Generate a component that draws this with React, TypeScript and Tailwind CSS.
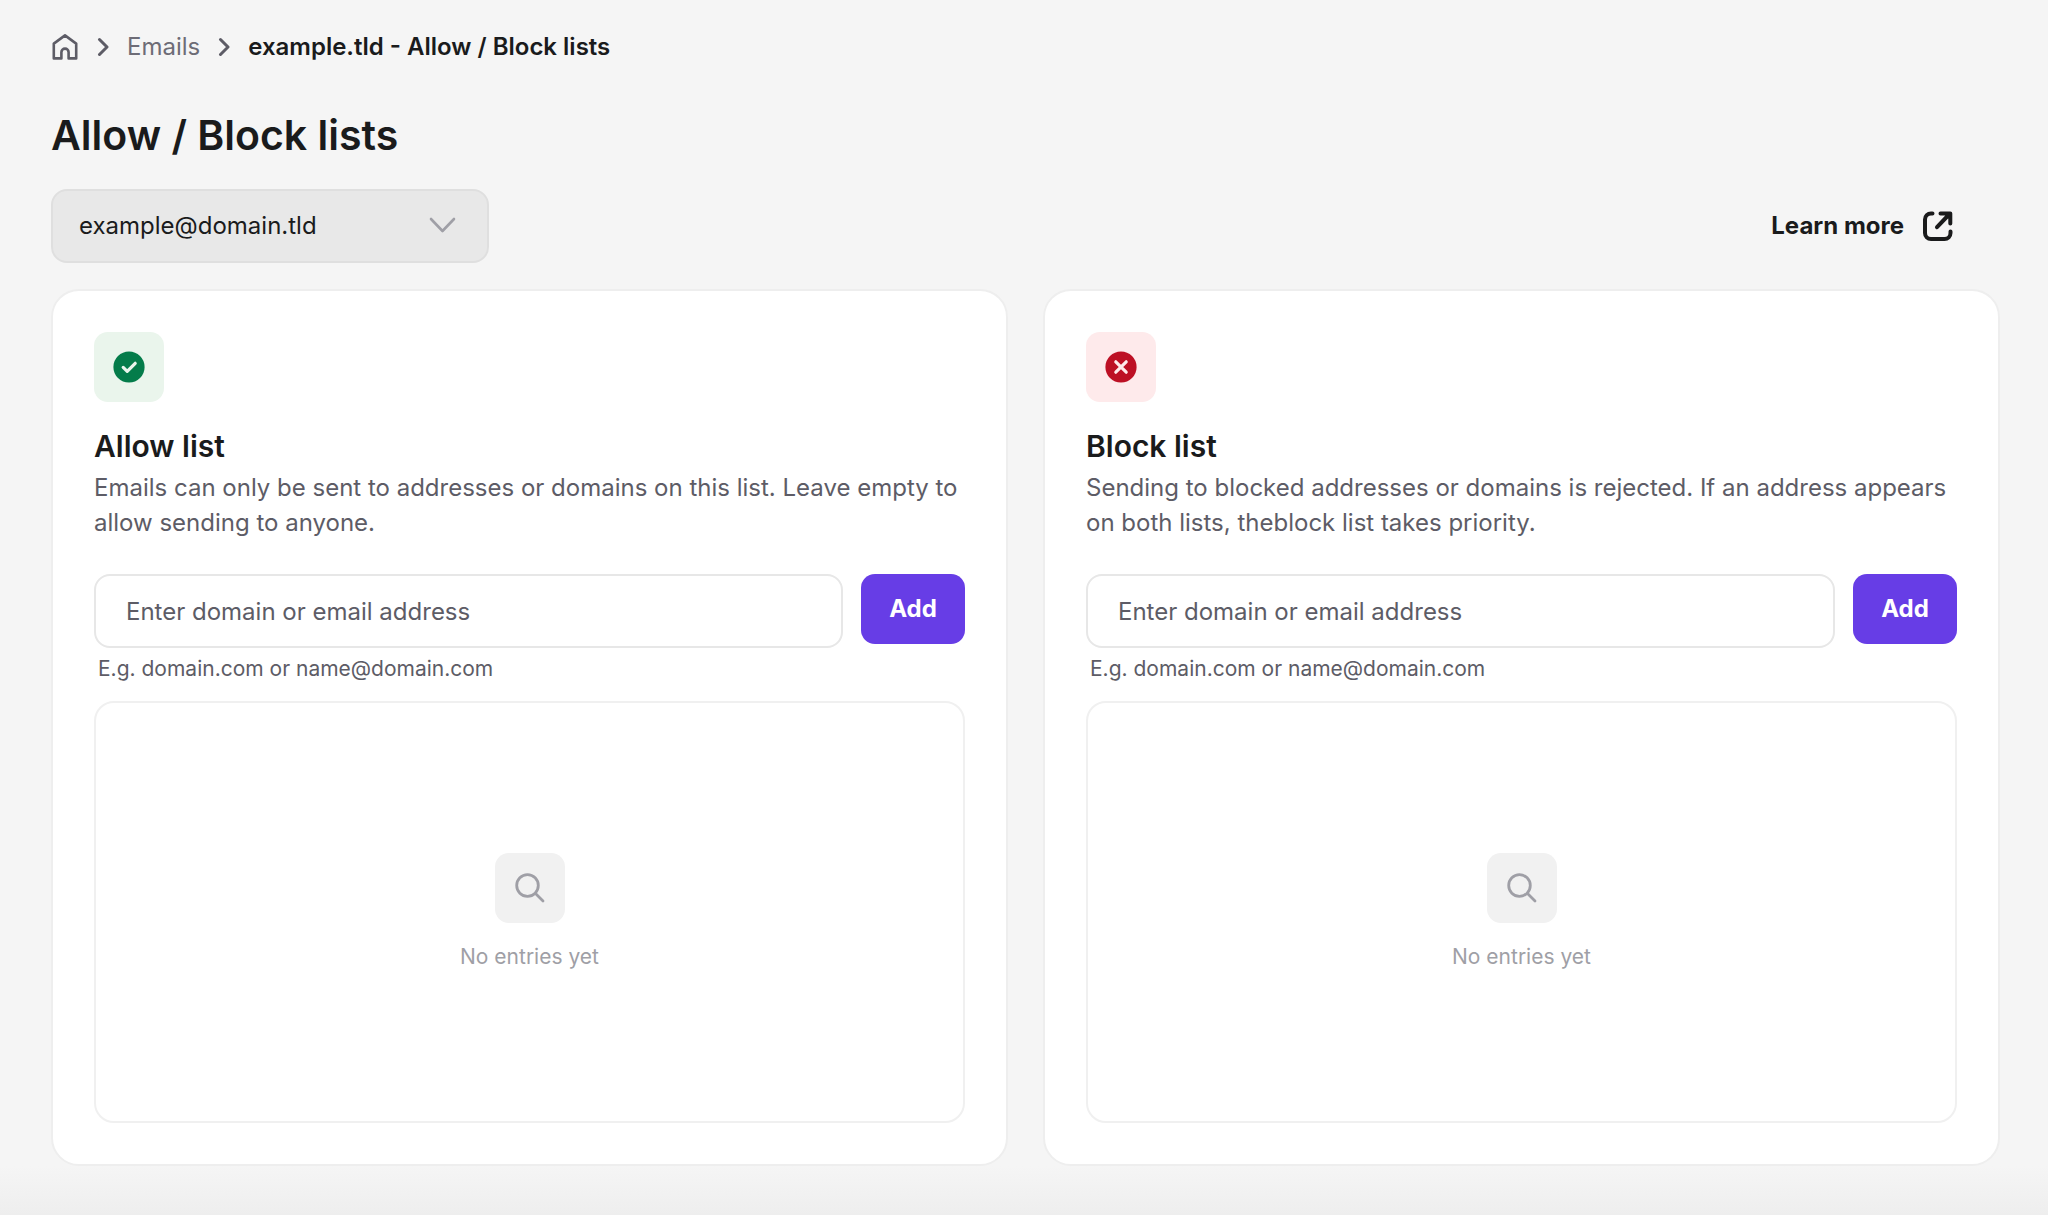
import { useState, type FormEvent, type ReactNode } from "react";

function HomeIcon() {
  return (
    <svg className="h-7 w-7" viewBox="0 0 28 28" fill="none" stroke="#5d5c66" strokeWidth="2.6" strokeLinejoin="round">
      <path d="M2.8 10.6 14 2.4l11.2 8.2v14.8h-7.6v-6.2a3.6 3.6 0 0 0-7.2 0v6.2H2.8z" />
    </svg>
  );
}

function CrumbArrow() {
  return (
    <svg className="h-5 w-3" viewBox="0 0 12 20" fill="none" stroke="#5d5c66" strokeWidth="3" strokeLinecap="round" strokeLinejoin="round" aria-hidden="true">
      <path d="m2.5 2.5 7.5 7.5-7.5 7.5" />
    </svg>
  );
}

function ExternalIcon() {
  return (
    <svg className="h-8 w-8" viewBox="0 0 32 32" fill="none" stroke="#1a1b1c" strokeWidth="4" strokeLinecap="round" aria-hidden="true">
      <path d="M10.5 3.4H9a6 6 0 0 0-6 6V23a6 6 0 0 0 6 6h13.5a6 6 0 0 0 6-6v-1.5" />
      <path d="M18.5 3.4h9.8v10M28 3.5 15 17.2" strokeLinejoin="round" />
      <path d="M22 3.4h6.3v6.6z" fill="#1a1b1c" stroke="none" />
    </svg>
  );
}

function CheckBadge() {
  return (
    <svg className="h-8 w-8" viewBox="0 0 32 32" fill="none" aria-hidden="true">
      <circle cx="16" cy="16" r="15.6" fill="#047c4a" />
      <path d="m10.2 16.4 4 3.9 8-8" stroke="#eaf5ec" strokeWidth="3.2" strokeLinecap="round" strokeLinejoin="round" />
    </svg>
  );
}

function CrossBadge() {
  return (
    <svg className="h-8 w-8" viewBox="0 0 32 32" fill="none" aria-hidden="true">
      <circle cx="16" cy="16" r="15.6" fill="#bd1024" />
      <path d="m10.8 10.8 10.4 10.4m0-10.4L10.8 21.2" stroke="#feeaeb" strokeWidth="3.2" strokeLinecap="round" />
    </svg>
  );
}

function SearchIcon() {
  return (
    <svg className="h-8 w-8" viewBox="0 0 32 32" fill="none" stroke="#9f9fa6" strokeWidth="2.8" strokeLinecap="round" aria-hidden="true">
      <circle cx="13.5" cy="13.5" r="10.8" />
      <path d="m21.5 21.5 7.5 7.5" />
    </svg>
  );
}

type ListCardProps = {
  id: string;
  title: string;
  description: string;
  iconBg: string;
  icon: ReactNode;
};

function ListCard({ id, title, description, iconBg, icon }: ListCardProps) {
  const [value, setValue] = useState("");
  const [entries, setEntries] = useState<string[]>([]);

  const handleSubmit = (e: FormEvent) => {
    e.preventDefault();
    const entry = value.trim();
    if (!entry || entries.includes(entry)) return;
    setEntries([...entries, entry]);
    setValue("");
  };

  return (
    <section className="min-w-0 rounded-[28px] border-2 border-[#eeeeee] bg-white p-[41px]">
      <div className={`flex h-[70px] w-[70px] items-center justify-center rounded-[14px] ${iconBg}`}>
        {icon}
      </div>

      <h2 className="mt-6 text-[30px] leading-10 font-semibold">{title}</h2>
      <p className="mt-1 text-[24px] leading-[35px] text-[#5d5c66]">{description}</p>

      <form onSubmit={handleSubmit} className="mt-[34px]">
        <div className="flex items-start gap-[18px]">
          <input
            id={id}
            type="text"
            aria-label={`${title} domain or email address`}
            aria-describedby={`${id}-hint`}
            placeholder="Enter domain or email address"
            value={value}
            onChange={(e) => setValue(e.target.value)}
            className="h-[74px] min-w-0 flex-1 rounded-2xl border-2 border-[#e7e7e7] bg-white px-[30px] text-[24px] placeholder:text-[#5d5c66] placeholder:opacity-100"
          />
          <button
            type="submit"
            className="h-[70px] w-[104px] rounded-[14px] bg-[#673de6] text-[24px] font-bold text-white"
          >
            Add
          </button>
        </div>
        <p id={`${id}-hint`} className="mt-[7px] pl-1 text-[21px] leading-7 text-[#5d5c66]">
          E.g. domain.com or name@domain.com
        </p>
      </form>

      <div className="mt-[18px] flex min-h-[422px] flex-col items-center justify-center rounded-[20px] border-2 border-[#f0f0f0]">
        {entries.length === 0 ? (
          <>
            <div className="flex h-[70px] w-[70px] items-center justify-center rounded-[14px] bg-[#f1f1f1]">
              <SearchIcon />
            </div>
            <p className="mt-5 text-[21px] leading-7 text-[#9f9fa6]">No entries yet</p>
          </>
        ) : (
          <ul className="w-full flex-1 p-8 text-[21px] leading-7">
            {entries.map((entry) => (
              <li key={entry}>{entry}</li>
            ))}
          </ul>
        )}
      </div>
    </section>
  );
}

export default function App() {
  return (
    <main className="flex min-h-screen flex-col bg-[#f5f5f5] font-['Inter',sans-serif] text-[#1a1b1c]">
      <div className="pt-[31px] pr-12 pl-[51px]">
        <nav aria-label="Breadcrumb" className="flex h-8 items-center gap-[18px] text-[24px]">
          <a href="#" aria-label="Home">
            <HomeIcon />
          </a>
          <CrumbArrow />
          <a href="#" className="text-[#6d6c76]">
            Emails
          </a>
          <CrumbArrow />
          <span className="font-semibold" aria-current="page">
            example.tld - Allow / Block lists
          </span>
        </nav>

        <h1 className="mt-11 text-[41px] leading-14 font-semibold">Allow / Block lists</h1>

        <div className="mt-[26px] flex items-center justify-between pr-[46px]">
          <div className="relative">
            <select
              aria-label="Mailbox"
              className="h-[74px] w-[438px] appearance-none rounded-2xl border-2 border-[#dfdfdf] bg-[#e8e8e8] px-[26px] text-[24px]"
            >
              <option>example@domain.tld</option>
            </select>
            <svg
              className="pointer-events-none absolute top-7 right-8 h-4 w-7"
              viewBox="0 0 28 16"
              fill="none"
              stroke="#9f9fa6"
              strokeWidth="2.6"
              strokeLinecap="round"
              strokeLinejoin="round"
              aria-hidden="true"
            >
              <path d="m2 2 11.5 12L25 2" />
            </svg>
          </div>

          <a href="#" className="flex items-center gap-[18px] text-[24px] font-bold">
            Learn more
            <ExternalIcon />
          </a>
        </div>

        <div className="mt-[26px] grid grid-cols-2 gap-[35px]">
          <ListCard
            id="allow-entry"
            title="Allow list"
            description="Emails can only be sent to addresses or domains on this list. Leave empty to allow sending to anyone."
            iconBg="bg-[#eaf5ec]"
            icon={<CheckBadge />}
          />
          <ListCard
            id="block-entry"
            title="Block list"
            description="Sending to blocked addresses or domains is rejected. If an address appears on both lists, theblock list takes priority."
            iconBg="bg-[#feeaeb]"
            icon={<CrossBadge />}
          />
        </div>
      </div>

      {/* Bottom fade */}
      <div className="min-h-12 flex-1 bg-linear-to-b from-[#f5f5f5] to-[#eeeeee]" />
    </main>
  );
}
